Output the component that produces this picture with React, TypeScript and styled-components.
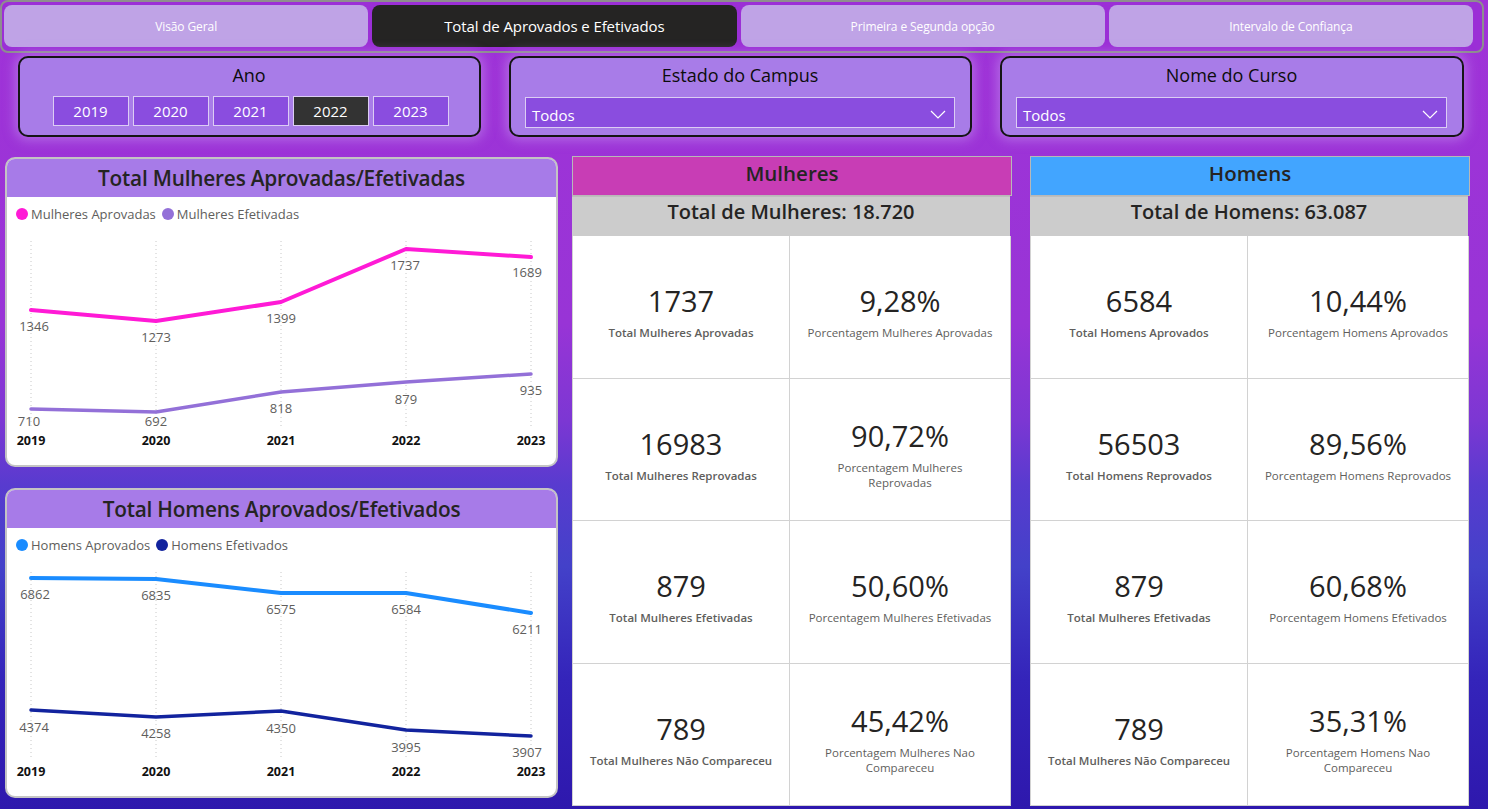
import React from "react";
import styled, { createGlobalStyle } from "styled-components";

const FONT = `"Open Sans", "Noto Sans", "DejaVu Sans", sans-serif`;

const Global = createGlobalStyle`
  html, body { margin: 0; padding: 0; }
  body { font-family: ${FONT}; width: 1488px; height: 809px; overflow: hidden; }
  * { box-sizing: border-box; }
`;

const Page = styled.div`
  width: 1488px;
  height: 809px;
  overflow: hidden;
  display: flex;
  flex-direction: column;
  background: linear-gradient(
    180deg,
    #a033d8 0%,
    #9834d6 40%,
    #7c37d3 52%,
    #583bcf 60%,
    #4341c9 70%,
    #3424ba 84%,
    #2e18ad 100%
  );
`;

/* ---------- Tabs ---------- */
const TabBar = styled.nav`
  width: 1484px;
  height: 53px;
  border: 2px solid #8e8e8e;
  border-radius: 8px;
  background: #9b2fd6;
  display: grid;
  grid-template-columns: repeat(4, 1fr);
  gap: 4px;
  padding: 3px 9px 4px 2px;
`;

const Tab = styled.div<{ $active?: boolean }>`
  border-radius: 8px;
  background: ${(p) => (p.$active ? "#252423" : "#bfa3e6")};
  color: #ffffff;
  font-size: ${(p) => (p.$active ? "15px" : "12px")};
  display: flex;
  align-items: center;
  justify-content: center;
  letter-spacing: -0.1px;
`;

/* ---------- Filters ---------- */
const FilterRow = styled.div`
  display: grid;
  grid-template-columns: 463px 463px 464px;
  column-gap: 28px;
  padding-left: 18px;
  margin-top: 3px;
`;

const FilterCard = styled.div`
  height: 81px;
  border: 2px solid #151515;
  border-radius: 10px;
  background: #a87ce8;
  box-shadow: 0 0 12px 3px rgba(196, 150, 240, 0.55);
  display: flex;
  flex-direction: column;
  align-items: center;
  padding: 6px 15px 0 14px;
`;

const FilterTitle = styled.div`
  font-size: 18px;
  line-height: 22px;
  color: #0c0c0c;
`;

const YearRow = styled.div`
  display: flex;
  gap: 4px;
  margin-top: 10px;
  margin-left: 3px;
`;

const YearButton = styled.div<{ $active?: boolean }>`
  width: 76px;
  height: 30px;
  border: 1px solid #dccdf4;
  background: ${(p) => (p.$active ? "#333333" : "#8a4ddf")};
  color: #ffffff;
  font-size: 15px;
  display: flex;
  align-items: center;
  justify-content: center;
`;

const Dropdown = styled.div`
  width: 100%;
  height: 31px;
  margin-top: 11px;
  border: 1px solid #dccdf4;
  background: #8a4ddf;
  color: #ffffff;
  font-size: 15px;
  display: flex;
  align-items: center;
  justify-content: space-between;
  padding: 4px 8px 0 6px;
`;

/* ---------- Main ---------- */
const Main = styled.div`
  display: flex;
  margin-top: 19px;
  padding-left: 5px;
`;

const LeftColumn = styled.div`
  width: 554px;
  display: flex;
  flex-direction: column;
  gap: 21px;
  margin-top: 1px;
`;

const ChartCard = styled.section`
  width: 553px;
  height: 310px;
  border: 2px solid #c4c4c4;
  border-radius: 10px;
  background: #ffffff;
  overflow: hidden;
  display: flex;
  flex-direction: column;
`;

const ChartHeader = styled.header`
  height: 38px;
  flex: none;
  background: #a77be8;
  color: #252423;
  font-size: 20.8px;
  font-weight: 600;
  display: flex;
  align-items: center;
  justify-content: center;
  letter-spacing: -0.2px;
`;

const Legend = styled.div`
  height: 34px;
  flex: none;
  display: flex;
  align-items: center;
  gap: 6px;
  padding-left: 9px;
  font-size: 13px;
  color: #605e5c;
`;

const LegendItem = styled.span`
  display: flex;
  align-items: center;
  gap: 3px;
`;

const Dot = styled.span<{ $color: string }>`
  width: 12px;
  height: 12px;
  border-radius: 50%;
  background: ${(p) => p.$color};
`;

const PlotSvg = styled.svg`
  display: block;
  flex: 1;
  width: 549px;
  font-family: ${FONT};
`;

const KpiCard = styled.section<{ $ml: number }>`
  width: 440px;
  height: 650px;
  margin-left: ${(p) => p.$ml}px;
  display: flex;
  flex-direction: column;
`;

const KpiHeader = styled.header<{ $bg: string }>`
  height: 40px;
  flex: none;
  background: ${(p) => p.$bg};
  border: 1px solid #b8b8b8;
  color: #252423;
  font-size: 20.5px;
  font-weight: 600;
  display: flex;
  align-items: center;
  justify-content: center;
  padding-bottom: 6px;
`;

const KpiTotal = styled.div`
  height: 40px;
  flex: none;
  width: 438px;
  background: #cccccc;
  border-top: 1px solid #bdbdbd;
  color: #252423;
  font-size: 20px;
  font-weight: 600;
  display: flex;
  justify-content: center;
  padding-top: 1px;
  line-height: 28px;
`;

const KpiGrid = styled.div`
  width: 438px;
  flex: 1;
  display: grid;
  grid-template-columns: 217px 221px;
  grid-template-rows: repeat(4, 1fr);
  background: #ffffff;
  border-left: 1px solid #d2d2d2;
`;

const KpiCell = styled.div`
  border-right: 1px solid #d2d2d2;
  border-bottom: 1px solid #d2d2d2;
  display: flex;
  flex-direction: column;
  align-items: center;
  justify-content: center;
  gap: 6px;
  padding-top: 10px;
`;

const KpiValue = styled.div`
  font-size: 29px;
  line-height: 36px;
  color: #252423;
`;

const KpiLabel = styled.div<{ $bold?: boolean }>`
  font-size: 11.5px;
  line-height: 15px;
  color: #605e5c;
  font-weight: ${(p) => (p.$bold ? 600 : 400)};
  text-align: center;
`;

/* ---------- Data ---------- */
const XS = [24, 149, 274, 399, 524];
const YEARS = ["2019", "2020", "2021", "2022", "2023"];

type Pt = { y: number; v: string; ly: number; dx?: number };
type Series = { color: string; width: number; pts: Pt[] };

const womenSeries: Series[] = [
  {
    color: "#ff1ad6",
    width: 4,
    pts: [
      { y: 79, v: "1346", ly: 95, dx: 3 },
      { y: 90, v: "1273", ly: 106 },
      { y: 71, v: "1399", ly: 87 },
      { y: 18, v: "1737", ly: 34, dx: -1 },
      { y: 26, v: "1689", ly: 41, dx: -4 },
    ],
  },
  {
    color: "#9370d8",
    width: 3.5,
    pts: [
      { y: 178, v: "710", ly: 190, dx: -2 },
      { y: 181, v: "692", ly: 190 },
      { y: 161, v: "818", ly: 177 },
      { y: 151, v: "879", ly: 168 },
      { y: 143, v: "935", ly: 159 },
    ],
  },
];

const menSeries: Series[] = [
  {
    color: "#1a8cff",
    width: 4,
    pts: [
      { y: 16, v: "6862", ly: 32, dx: 4 },
      { y: 17, v: "6835", ly: 33 },
      { y: 31, v: "6575", ly: 47 },
      { y: 31, v: "6584", ly: 47 },
      { y: 51, v: "6211", ly: 67, dx: -4 },
    ],
  },
  {
    color: "#12239e",
    width: 3.5,
    pts: [
      { y: 148, v: "4374", ly: 165, dx: 3 },
      { y: 155, v: "4258", ly: 171 },
      { y: 149, v: "4350", ly: 166 },
      { y: 168, v: "3995", ly: 185 },
      { y: 174, v: "3907", ly: 190, dx: -4 },
    ],
  },
];

function LineChart({
  title,
  legend,
  series,
}: {
  title: string;
  legend: { label: string; color: string }[];
  series: Series[];
}) {
  return (
    <ChartCard>
      <ChartHeader>{title}</ChartHeader>
      <Legend>
        {legend.map((l) => (
          <LegendItem key={l.label}>
            <Dot $color={l.color} />
            {l.label}
          </LegendItem>
        ))}
      </Legend>
      <PlotSvg viewBox="0 0 549 234" width={549} height={234}>
        {XS.map((x) => (
          <line
            key={x}
            x1={x}
            x2={x}
            y1={10}
            y2={196}
            stroke="#c8c8c8"
            strokeWidth={1}
            strokeDasharray="1 3"
          />
        ))}
        {series.map((s, i) => (
          <polyline
            key={i}
            points={s.pts.map((p, j) => `${XS[j]},${p.y}`).join(" ")}
            fill="none"
            stroke={s.color}
            strokeWidth={s.width}
            strokeLinejoin="round"
            strokeLinecap="round"
          />
        ))}
        {series.map((s, i) =>
          s.pts.map((p, j) => (
            <text
              key={`${i}-${j}`}
              x={XS[j] + (p.dx ?? 0)}
              y={p.ly}
              fill="#605e5c"
              fontSize={13}
              textAnchor="middle"
              dominantBaseline="central"
            >
              {p.v}
            </text>
          ))
        )}
        {YEARS.map((y, j) => (
          <text
            key={y}
            x={XS[j]}
            y={209}
            fill="#111111"
            fontSize={12.5}
            fontWeight={700}
            textAnchor="middle"
            dominantBaseline="central"
          >
            {y}
          </text>
        ))}
      </PlotSvg>
    </ChartCard>
  );
}

type Kpi = { value: string; label: string[]; bold?: boolean };

function KpiPanel({
  title,
  color,
  total,
  items,
  ml,
}: {
  title: string;
  color: string;
  total: string;
  items: Kpi[];
  ml: number;
}) {
  return (
    <KpiCard $ml={ml}>
      <KpiHeader $bg={color}>{title}</KpiHeader>
      <KpiTotal>{total}</KpiTotal>
      <KpiGrid>
        {items.map((k, i) => (
          <KpiCell key={i}>
            <KpiValue>{k.value}</KpiValue>
            <KpiLabel $bold={k.bold}>
              {k.label.map((l, n) => (
                <div key={n}>{l}</div>
              ))}
            </KpiLabel>
          </KpiCell>
        ))}
      </KpiGrid>
    </KpiCard>
  );
}

const womenKpis: Kpi[] = [
  { value: "1737", label: ["Total Mulheres Aprovadas"], bold: true },
  { value: "9,28%", label: ["Porcentagem Mulheres Aprovadas"] },
  { value: "16983", label: ["Total Mulheres Reprovadas"], bold: true },
  { value: "90,72%", label: ["Porcentagem Mulheres", "Reprovadas"] },
  { value: "879", label: ["Total Mulheres Efetivadas"], bold: true },
  { value: "50,60%", label: ["Porcentagem Mulheres Efetivadas"] },
  { value: "789", label: ["Total Mulheres Não Compareceu"], bold: true },
  { value: "45,42%", label: ["Porcentagem Mulheres Nao", "Compareceu"] },
];

const menKpis: Kpi[] = [
  { value: "6584", label: ["Total Homens Aprovados"], bold: true },
  { value: "10,44%", label: ["Porcentagem Homens Aprovados"] },
  { value: "56503", label: ["Total Homens Reprovados"], bold: true },
  { value: "89,56%", label: ["Porcentagem Homens Reprovados"] },
  { value: "879", label: ["Total Mulheres Efetivadas"], bold: true },
  { value: "60,68%", label: ["Porcentagem Homens Efetivados"] },
  { value: "789", label: ["Total Mulheres Não Compareceu"], bold: true },
  { value: "35,31%", label: ["Porcentagem Homens Nao", "Compareceu"] },
];

function Chevron() {
  return (
    <svg width="16" height="9" viewBox="0 0 16 9">
      <polyline points="1,1 8,8 15,1" fill="none" stroke="#ffffff" strokeWidth="1.2" />
    </svg>
  );
}

export default function App() {
  return (
    <Page>
      <Global />
      <TabBar>
        <Tab>Visão Geral</Tab>
        <Tab $active>Total de Aprovados e Efetivados</Tab>
        <Tab>Primeira e Segunda opção</Tab>
        <Tab>Intervalo de Confiança</Tab>
      </TabBar>

      <FilterRow>
        <FilterCard>
          <FilterTitle>Ano</FilterTitle>
          <YearRow>
            {YEARS.map((y) => (
              <YearButton key={y} $active={y === "2022"}>
                {y}
              </YearButton>
            ))}
          </YearRow>
        </FilterCard>
        <FilterCard>
          <FilterTitle>Estado do Campus</FilterTitle>
          <Dropdown>
            <span>Todos</span>
            <Chevron />
          </Dropdown>
        </FilterCard>
        <FilterCard>
          <FilterTitle>Nome do Curso</FilterTitle>
          <Dropdown>
            <span>Todos</span>
            <Chevron />
          </Dropdown>
        </FilterCard>
      </FilterRow>

      <Main>
        <LeftColumn>
          <LineChart
            title="Total Mulheres Aprovadas/Efetivadas"
            legend={[
              { label: "Mulheres Aprovadas", color: "#ff1ad6" },
              { label: "Mulheres Efetivadas", color: "#9370d8" },
            ]}
            series={womenSeries}
          />
          <LineChart
            title="Total Homens Aprovados/Efetivados"
            legend={[
              { label: "Homens Aprovados", color: "#1a8cff" },
              { label: "Homens Efetivados", color: "#12239e" },
            ]}
            series={menSeries}
          />
        </LeftColumn>
        <KpiPanel
          ml={13}
          title="Mulheres"
          color="#c83db5"
          total="Total de Mulheres: 18.720"
          items={womenKpis}
        />
        <KpiPanel
          ml={18}
          title="Homens"
          color="#42a5ff"
          total="Total de Homens: 63.087"
          items={menKpis}
        />
      </Main>
    </Page>
  );
}
